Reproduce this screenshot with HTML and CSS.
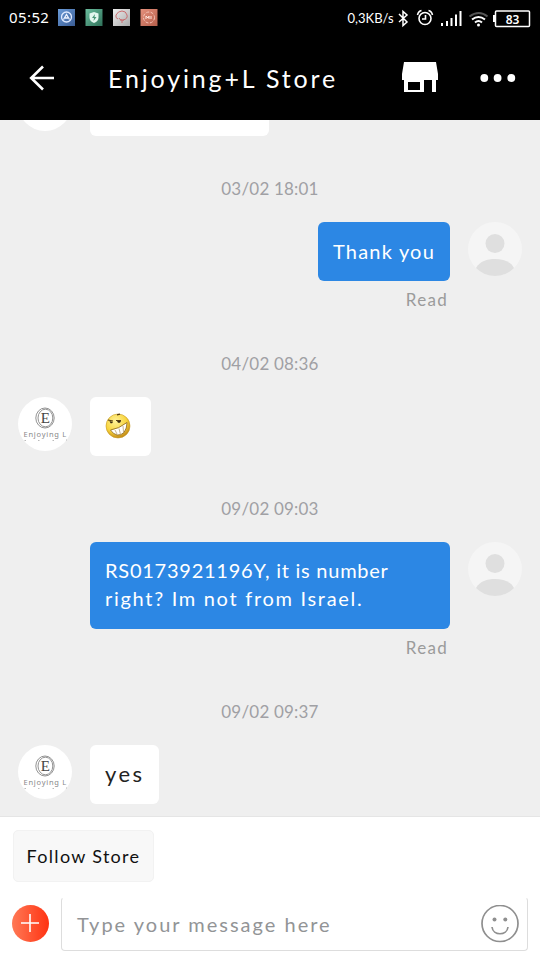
FILE: index.html
```html
<!DOCTYPE html>
<html lang="en">
<head>
  <meta charset="UTF-8">
  <title>Enjoying+L Store</title>
  <link rel="stylesheet" href="styles.css">
</head>
<body>
  <!-- shared drawings -->
  <svg class="defs" width="0" height="0">
    <defs>
      <symbol id="user" viewBox="0 0 54 54">
        <clipPath id="userClip"><circle cx="27" cy="27" r="27"/></clipPath>
        <circle cx="27" cy="27" r="27" fill="#f5f5f5"/>
        <circle cx="27" cy="21.5" r="9.5" fill="#dfdfdf"/>
        <path clip-path="url(#userClip)" d="M8 46C12 39 19 37 27 37s15 2 19 9v8H8z" fill="#dfdfdf"/>
      </symbol>
      <symbol id="store" viewBox="0 0 54 54">
        <circle cx="27" cy="27" r="27" fill="#fff"/>
        <g fill="none" stroke="#777" stroke-width=".8">
          <ellipse cx="27" cy="21" rx="9.2" ry="10"/>
          <ellipse cx="27.4" cy="21" rx="7.4" ry="8.8"/>
        </g>
        <text class="logo-letter" x="27.3" y="26.2" text-anchor="middle">E</text>
        <text class="logo-name" x="5.5" y="40">Enjoying L</text>
        <path d="M6.500 43.500h1.500M20 43.500h1.500M34.500 43.500h1.500M48 43h1" stroke="#aaa" stroke-width=".8"/>
      </symbol>
    </defs>
  </svg>

  <div class="app">
    <div class="status-bar">
      <span class="clock">05:52</span>
      <svg class="app-icons" width="100" height="18" viewBox="0 0 100 18">
        <defs>
          <linearGradient id="blue" x2="1" y2="1"><stop stop-color="#6a9bd8"/><stop offset="1" stop-color="#3a5c94"/></linearGradient>
          <linearGradient id="green" x2="1" y2="1"><stop stop-color="#6bbd9e"/><stop offset="1" stop-color="#2f7159"/></linearGradient>
          <linearGradient id="gray" x2="1" y2="1"><stop stop-color="#eee"/><stop offset="1" stop-color="#aaa"/></linearGradient>
          <linearGradient id="coral" x2="1" y2="1"><stop stop-color="#e5907c"/><stop offset="1" stop-color="#b55f4b"/></linearGradient>
        </defs>
        <path d="M0 1h17v17H0z" fill="url(#blue)"/>
        <circle cx="8.500" cy="9" r="5" fill="none" stroke="#dfeaff" stroke-width="1.300"/>
        <path d="M5.500 11.500l3-5 3 5M7 10h3" fill="none" stroke="#eef4ff" stroke-width="1.300"/>
        <path d="M27.500 1h17v17h-17z" fill="url(#green)"/>
        <path d="M36 4l4.500 1.500v4q0 3.500-4.500 5.500-4.500-2-4.500-5.500v-4z" fill="#e4f7ef"/>
        <path d="M37 6l-3 4h2l-.5 3 3-4h-2z" fill="#4a9577"/>
        <path d="M55 1h17v17H55z" fill="url(#gray)"/>
        <path d="M60 11q-3-1-2-4 2-4 6-4t5 4-4 5q-4 0-4-2M62 12q3 1 4 0M63 14h2" fill="none" stroke="#c96d70"/>
        <path d="M82.500 1h17v17h-17z" fill="url(#coral)"/>
        <circle cx="91" cy="9.500" r="5.500" fill="none" stroke="#f6c4b8" stroke-dasharray="3 1.500"/>
        <path d="M88 11V8l2 2 1-2v3M93 8v3" fill="none" stroke="#ffe6df"/>
      </svg>
      <span class="speed">0,3KB/s</span>
      <svg class="signal-icons" width="143" height="22" viewBox="0 0 143 22">
        <path d="M2 7l8 8-4 3.500v-14L10 8l-8 7" fill="none" stroke="#fff" stroke-width="1.500"/>
        <g fill="none" stroke="#fff" stroke-width="1.600">
          <circle cx="28" cy="11.500" r="6"/>
          <path d="M28.500 8v4H25M20.500 8q1-4 4-4.500M35.500 8q-1-4-4-4.500"/>
        </g>
        <path d="M44 16h2v3h-2zM49 14h2v5h-2zM53.500 11h2v8h-2zM58 7.500h2V19h-2zM62.500 4h2v15h-2z" fill="#fff"/>
        <g fill="none" stroke-width="2">
          <path d="M72.500 9.500q9.500-7 18 0" stroke="#555"/>
          <path d="M75 12.500q6.500-5 13 0M78 15.500q3.500-3 7 0" stroke="#fff"/>
        </g>
        <circle cx="81.500" cy="18" r="1.500" fill="#fff"/>
        <rect x="98.500" y="4" width="34" height="15.500" rx="1" fill="none" stroke="#fff" stroke-width="1.500"/>
        <path d="M96 8h2v7h-2z" fill="#fff"/>
        <text class="battery" x="115.500" y="16.500" text-anchor="middle">83</text>
      </svg>
    </div>

    <div class="header">
      <svg class="back" width="26" height="26" viewBox="0 0 26 26">
        <path d="M25 13H2M14 1.500L2.200 13 14 24.500" fill="none" stroke="#fff" stroke-width="2.600"/>
      </svg>
      <h1>Enjoying+L Store</h1>
      <svg class="shop" width="36" height="30" viewBox="0 0 36 30">
        <path fill="#fff" fill-rule="evenodd" d="M2 0h32l2 12v6h-2v12h-4V18h-8v12H2V18H0v-6zM6 20v8h12v-8z"/>
      </svg>
      <svg class="more" width="36" height="8" viewBox="0 0 36 8" fill="#fff">
        <circle cx="4.300" cy="4" r="3.900"/><circle cx="17.600" cy="4" r="3.900"/><circle cx="31.300" cy="4" r="3.900"/>
      </svg>
    </div>

    <div class="chat">
      <div class="message first">
        <div class="avatar"></div>
        <div class="bubble"></div>
      </div>

      <div class="date">03/02 18:01</div>
      <div class="message mine">
        <div class="bubble"><span class="thanks">Thank you</span></div>
        <svg class="avatar"><use href="#user"/></svg>
      </div>
      <div class="read">Read</div>

      <div class="date">04/02 08:36</div>
      <div class="message">
        <svg class="avatar"><use href="#store"/></svg>
        <div class="bubble emoji">
          <svg width="26" height="26" viewBox="0 0 26 26">
            <defs>
              <radialGradient id="face" cx=".4" cy=".3" r=".7"><stop stop-color="#fff29a"/><stop offset=".65" stop-color="#f8d43c"/><stop offset="1" stop-color="#c38b17"/></radialGradient>
            </defs>
            <circle cx="13" cy="13" r="12" fill="url(#face)" stroke="#c69a27" stroke-width=".6"/>
            <path d="M5.500 17q8-1 16.500-7.500 0 6-3 10-3 3-7 2.500-4-1-6.500-5z" fill="#fff" stroke="#8b651c" stroke-width=".8"/>
            <path d="M10 17l2 4M14 15.500l1.500 6M18 13l.5 6" stroke="#b9a071" stroke-width=".8"/>
            <path d="M3 7l5 1M11 7.500h5M12 1.800l3-.6" stroke="#583e12" stroke-width="1.200"/>
            <path d="M4.500 8L8 9l-1 1.300H5.500zM12 8h4l-1 1.800h-2z" fill="#3a2b13"/>
          </svg>
        </div>
      </div>

      <div class="date">09/02 09:03</div>
      <div class="message mine">
        <div class="bubble wide">
          <span class="line-one">RS0173921196Y, it is number</span><br>
          <span class="line-two">right? Im not from Israel.</span>
        </div>
        <svg class="avatar"><use href="#user"/></svg>
      </div>
      <div class="read">Read</div>

      <div class="date">09/02 09:37</div>
      <div class="message">
        <svg class="avatar"><use href="#store"/></svg>
        <div class="bubble yes">yes</div>
      </div>
    </div>

    <div class="footer">
      <button class="follow">Follow Store</button>
      <div class="composer">
        <svg width="38" height="38" viewBox="0 0 38 38">
          <defs><linearGradient id="plus"><stop stop-color="#ff7956"/><stop offset="1" stop-color="#ff3211"/></linearGradient></defs>
          <circle cx="18.500" cy="18.500" r="18.500" fill="url(#plus)"/>
          <path d="M9 18h18M18 9v18" stroke="#fff" stroke-width="1.600"/>
        </svg>
        <div class="input">
          <span>Type your message here</span>
          <svg width="38" height="38" viewBox="0 0 38 38">
            <g fill="none" stroke="#8f8f8f" stroke-width="1.700">
              <circle cx="19" cy="18.500" r="18"/>
              <path d="M11 22c1 9 15 9 16 0"/>
            </g>
            <circle cx="13.500" cy="14.500" r="2" fill="#8f8f8f"/><circle cx="24.300" cy="14.500" r="2" fill="#8f8f8f"/>
          </svg>
        </div>
      </div>
    </div>
  </div>
</body>
</html>
```
FILE: styles.css
```css
* {
  box-sizing: border-box;
}
body {
  margin: 0;
  font-family: Lato, "Open Sans", sans-serif;
  background: #efefef;
}
svg {
  display: block;
  flex-shrink: 0;
}
.defs {
  position: absolute;
}
.app {
  width: 540px;
  height: 960px;
  display: flex;
  flex-direction: column;
  overflow: hidden;
}
.status-bar {
  height: 36px;
  padding-left: 9px;
  display: flex;
  align-items: center;
  background: #000;
  color: #fff;
}
.clock {
  width: 50px;
  margin-top: -2px;
  font-family: "Noto Sans", sans-serif;
  font-size: 15px;
  letter-spacing: 0.4px;
}
.app-icons {
  margin-top: -2px;
}
.speed {
  width: 47px;
  margin-left: 189px;
  font-size: 13px;
  white-space: nowrap;
}
.signal-icons {
  margin-left: 3px;
  margin-top: -1px;
}
.battery {
  font: 600 12px "Noto Sans", sans-serif;
  fill: #fff;
}
.header {
  height: 84px;
  padding: 0 24px 0 29px;
  display: flex;
  align-items: center;
  background: #000;
  color: #fff;
}
h1 {
  width: 294px;
  margin: 0 0 0 52px;
  padding-left: 1px;
  font-size: 25px;
  font-weight: 400;
  letter-spacing: 2.85px;
  white-space: nowrap;
}
.back {
  margin-top: -1px;
}
.shop {
  margin-left: 1px;
  margin-top: -2px;
}
.more {
  margin-left: 42px;
}
.chat {
  height: 696px;
  overflow: hidden;
  background: #efefef;
}
.message {
  display: flex;
  gap: 18px;
  padding: 0 18px;
}
.message.mine {
  justify-content: flex-end;
}
.message.first {
  margin-top: -43px;
}
.first .avatar {
  border-radius: 50%;
  background: #fff;
}
.first .bubble {
  width: 179px;
}
.avatar {
  width: 54px;
  height: 54px;
}
.logo-letter {
  font: 15px "Liberation Serif", serif;
  fill: #444;
}
.logo-name {
  font: 7.5px "Noto Sans", sans-serif;
  letter-spacing: 0.75px;
  fill: #888;
}
.bubble {
  min-height: 59px;
  padding: 15px;
  border-radius: 6px;
  background: #fff;
  color: #222;
  font-size: 20px;
  line-height: 28px;
  white-space: nowrap;
}
.mine .bubble {
  width: 132px;
  background: #2c87e4;
  color: #fff;
}
.mine .wide {
  width: 360px;
  height: 87px;
  padding-top: 14px;
}
.thanks {
  letter-spacing: 1.2px;
}
.line-one {
  letter-spacing: 0.75px;
}
.line-two {
  letter-spacing: 1.7px;
}
.emoji {
  width: 61px;
  padding-top: 16px;
}
.yes {
  width: 69px;
  font-size: 22px;
  letter-spacing: 2.4px;
}
.date {
  height: 24px;
  margin: 40px 0 22px;
  text-align: center;
  font-size: 17px;
  line-height: 26px;
  letter-spacing: 0.2px;
  color: #a0a0a4;
}
.read {
  height: 23px;
  margin-top: 7px;
  padding-right: 92px;
  text-align: right;
  font-size: 17px;
  line-height: 24px;
  letter-spacing: 1.3px;
  color: #9b9b9b;
}
.footer {
  height: 144px;
  padding: 13px 12px 0;
  border-top: 1px solid #e5e5e5;
  background: #fff;
}
.follow {
  display: block;
  width: 141px;
  height: 52px;
  margin-left: 1px;
  padding: 0;
  border: 1px solid #f2f2f2;
  border-radius: 5px;
  background: #f8f8f8;
  color: #111;
  font-family: inherit;
  font-size: 18px;
  letter-spacing: 1.3px;
}
.composer {
  margin-top: 15px;
  display: flex;
  align-items: center;
  gap: 11px;
}
.input {
  flex: 1;
  height: 54px;
  padding: 0 8px 0 15px;
  display: flex;
  align-items: center;
  justify-content: space-between;
  border: 1px solid #ddd;
  border-top-color: transparent;
  border-radius: 4px;
  color: #929496;
  font-size: 20px;
  letter-spacing: 2px;
}
```
